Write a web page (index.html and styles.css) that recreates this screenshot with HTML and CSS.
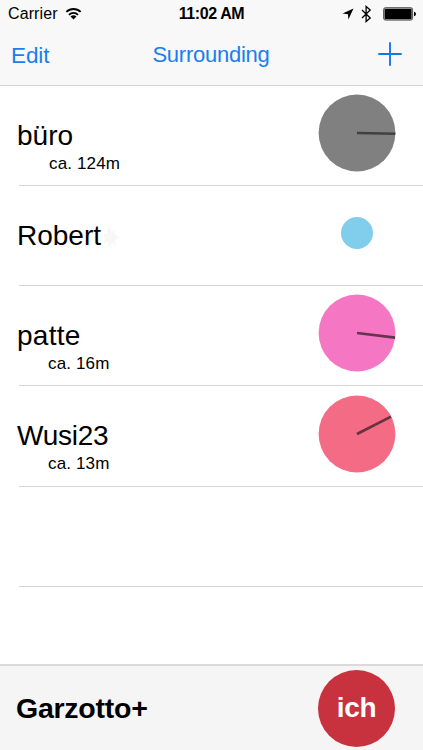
FILE: index.html
```html
<!DOCTYPE html>
<html lang="en">
<head>
<meta charset="utf-8">
<title>Surrounding</title>
<link rel="stylesheet" href="styles.css">
</head>
<body>
<div class="app">
  <header class="header">
    <div class="status">
      <div class="status-left"><span class="carrier">Carrier</span>
        <svg class="wifi" width="17" height="13" viewBox="0 0 18 14"><g fill="none" stroke="#000" stroke-width="1.9"><path d="M1.3 5.3a11 11 0 0 1 15.4 0"/><path d="M4.1 8.4a7 7 0 0 1 9.8 0"/></g><path d="M5.8 10.3a4.6 4.6 0 0 1 6.4 0L9 13.5z"/></svg>
      </div>
      <span class="time">11:02 AM</span>
      <div class="status-right">
        <svg width="12" height="12" viewBox="0 0 12 12"><path d="M11.5.4 6.4 11.4 6 6.2.5 5.6z"/></svg>
        <svg width="11" height="18" viewBox="0 0 11 18"><path d="M1 5l8.2 8-4.1 3.5v-15L9.2 5 1 13" fill="none" stroke="#000" stroke-width="1.3"/></svg>
        <svg class="battery" width="33" height="14" viewBox="0 0 33 14"><rect x=".6" y=".7" width="29" height="12.4" rx="1.8" fill="#999" stroke="#555" stroke-width="1"/><rect x="1.8" y="1.9" width="26.6" height="10" rx=".6"/><path d="M31 4.8q2 .4 2 2.2t-2 2.2z"/></svg>
      </div>
    </div>
    <nav class="nav">
      <span class="edit">Edit</span>
      <span class="title">Surrounding</span>
      <svg class="plus" width="24" height="24" viewBox="0 0 24 24"><path d="M12 .3v23.4M.3 12h23.4" stroke="#1477e8" stroke-width="1.9"/></svg>
    </nav>
  </header>
  <main class="list">
    <div class="row">
      <div class="info"><div class="name buero">büro</div><div class="distance far">ca. 124m</div></div>
      <svg class="dial" viewBox="0 0 78 78"><circle cx="39" cy="39" r="38.4" fill="#808080"/><path d="M39 39 77.3 39.8" stroke="#404040" stroke-width="2.6"/></svg>
    </div>
    <div class="row">
      <div class="info"><div class="name robert">Robert<svg class="spark" width="18" height="22" viewBox="0 0 18 22"><path d="M7 0l3 7 2-4 1 6 5 2-5 3 1 6-4-3-3 5-1-6-5 1 3-5-4-3 5-1z" fill="#f7f7f7"/></svg></div></div>
      <svg class="dial" viewBox="0 0 78 78"><circle cx="39" cy="39" r="16" fill="#80ceec"/></svg>
    </div>
    <div class="row">
      <div class="info"><div class="name patte">patte</div><div class="distance">ca. 16m</div></div>
      <svg class="dial" viewBox="0 0 78 78"><circle cx="39" cy="39" r="38.4" fill="#f576c3"/><path d="M39 39 77.1 43.6" stroke="#683350" stroke-width="2.7"/></svg>
    </div>
    <div class="row">
      <div class="info"><div class="name wusi">Wusi23</div><div class="distance">ca. 13m</div></div>
      <svg class="dial" viewBox="0 0 78 78"><circle cx="39" cy="39" r="38.4" fill="#f36b84"/><path d="M39 39 73 21.6" stroke="#66343d" stroke-width="2.7"/></svg>
    </div>
    <div class="row"></div>
  </main>
  <footer class="footer">
    <span class="brand">Garzotto+</span>
    <div class="me">ich</div>
  </footer>
</div>
</body>
</html>
```
FILE: styles.css
```css
* { box-sizing: border-box; }
body { margin: 0; background: #fff; color: #000; font-family: "Liberation Sans", Arial, sans-serif; }
svg { display: block; flex: none; }
.app { width: 423px; height: 750px; display: flex; flex-direction: column; overflow: hidden; }
.header { height: 85.5px; flex: none; background: #f8f8f8; border-bottom: 1px solid #d4d4d4; }
.status { height: 28px; display: grid; grid-template-columns: 1fr auto 1fr; align-items: center; padding: 0 8px; font-size: 16px; line-height: 28px; }
.status-left { display: flex; align-items: center; gap: 8px; }
.carrier { width: 49px; white-space: nowrap; letter-spacing: .1px; }
.wifi { margin-top: -2px; }
.time { font-weight: bold; font-size: 16px; letter-spacing: -.4px; }
.status-right { display: flex; align-items: center; justify-content: flex-end; gap: 7px; margin-right: -1px; }
.battery { margin: 0 0 1px 4px; }
.nav { height: 52px; display: grid; grid-template-columns: 1fr auto 1fr; align-items: center; padding: 0 21px 0 11px; color: #1a7fee; font-size: 22.5px; line-height: 40px; }
.edit { padding-top: 4px; letter-spacing: -.1px; }
.title { font-size: 22px; letter-spacing: -.25px; padding: 2px 0 0 9px; }
.plus { justify-self: end; }
.list { flex: 1; }
.row { height: 100.3px; margin-left: 19px; border-bottom: 1px solid #d5d5d5; display: flex; justify-content: space-between; padding-right: 27px; }
.info { padding-top: 34px; margin-left: -2px; }
.name { display: flex; font-size: 28px; line-height: 32px; height: 32px; white-space: nowrap; }
.patte { letter-spacing: .25px; }
.wusi { letter-spacing: -.25px; }
.spark { margin: 6px 0 0 1px; }
.distance { margin-left: 31px; font-size: 17px; line-height: 20px; margin-top: 2px; white-space: nowrap; letter-spacing: .15px; }
.far { margin-left: 32px; }
.dial { width: 78px; height: 78px; margin-top: 8.3px; }
.footer { height: 86px; flex: none; background: #f5f5f5; border-top: 2px solid #dadada; display: flex; justify-content: space-between; padding: 4px 28px 0 16px; }
.brand { font-size: 28.5px; font-weight: bold; line-height: 76px; letter-spacing: -.25px; }
.me { width: 77px; height: 77px; border-radius: 50%; background: #c8313e; color: #fff; font-size: 28px; font-weight: bold; line-height: 76px; text-align: center; letter-spacing: -.3px; }
```
